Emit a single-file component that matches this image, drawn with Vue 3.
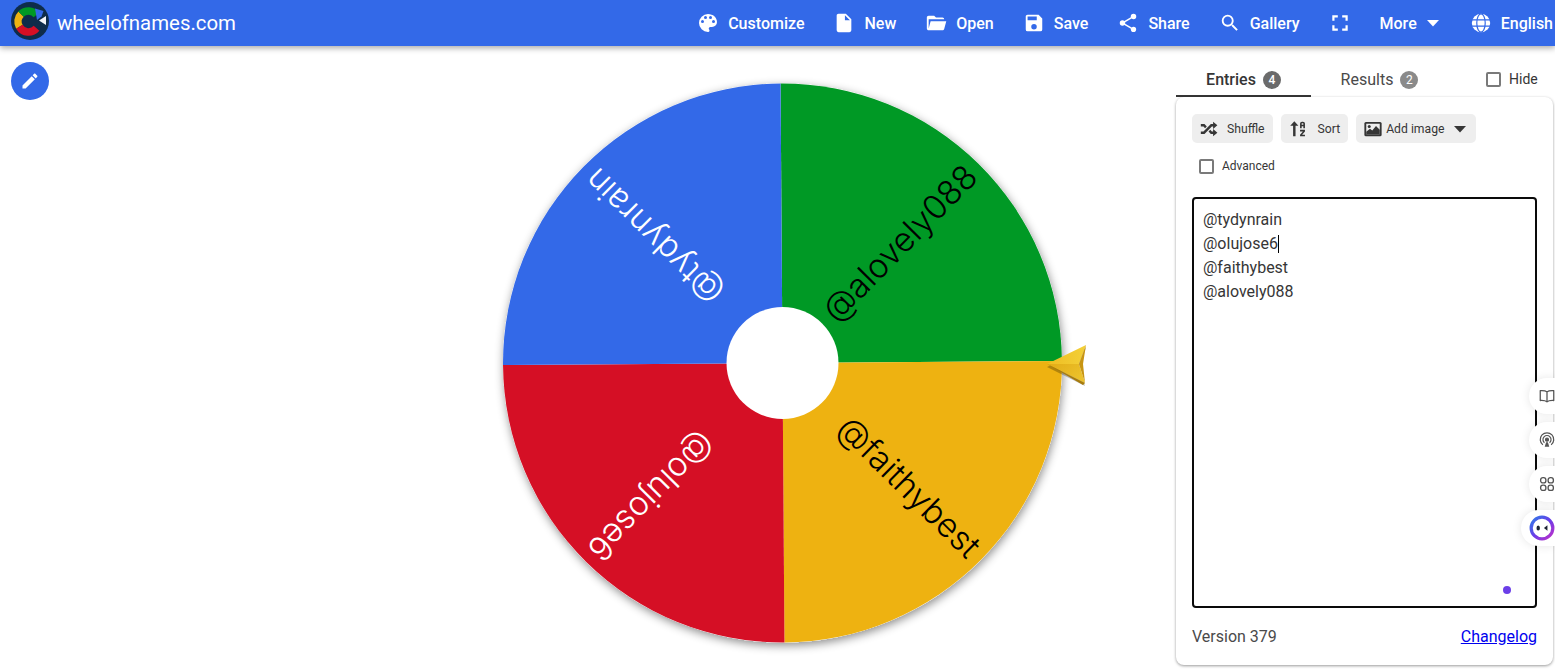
<template>
  <div class="page">
    <header class="topbar">
      <div class="brand">
        <svg class="logo" viewBox="0 0 38 38">
          <circle cx="19" cy="19" r="19" fill="#0e2c4a" />
          <path d="M8.41 24.75A10.5 10.5 0 0 1 10.07 12.07" class="seg" stroke="#eeb211" />
          <path d="M10.07 12.07A10.5 10.5 0 0 1 25.54 12.75" class="seg" stroke="#009925" />
          <path d="M25.54 26.25A10.5 10.5 0 0 1 8.41 24.75" class="seg" stroke="#d50f25" />
          <path d="M24 6.5L32.5 9L30.5 14.5L26 18Z" fill="#3369e8" />
          <path d="M35 14L35 23L28 18.5Z" fill="#f2f4f8" />
        </svg>
        <span class="brand-name">wheelofnames.com</span>
      </div>
      <nav class="menu">
        <a v-for="item in menu" :key="item.icon" class="menu-item">
          <svg class="menu-icon" :viewBox="item.box || '0 0 24 24'"><path :d="icons[item.icon]" fill="#fff" /></svg>
          <span v-if="item.label">{{ item.label }}</span>
        </a>
        <a class="menu-item">
          <span>More</span>
          <svg class="menu-caret" viewBox="0 0 24 24"><path :d="icons.caret" fill="#fff" /></svg>
        </a>
        <a class="menu-item">
          <svg class="menu-icon" viewBox="0 0 24 24">
            <circle cx="12" cy="12" r="10" fill="#fff" />
            <g fill="none" stroke="#3369e8" stroke-width="1.3">
              <ellipse cx="12" cy="12" rx="4.6" ry="10" />
              <path d="M2 8.6H22M2 15.4H22" />
            </g>
          </svg>
          <span>English</span>
        </a>
      </nav>
    </header>

    <main class="content">
      <section class="wheel-area">
        <button class="edit-btn">
          <svg viewBox="0 0 24 24"><path :d="icons.pencil" fill="#fff" /></svg>
        </button>
        <svg class="wheel" viewBox="482 58 610 610">
          <defs>
            <filter id="wheelShadow" x="-5%" y="-5%" width="110%" height="110%">
              <feDropShadow dx="1" dy="3" stdDeviation="5" flood-color="#000" flood-opacity="0.45" />
            </filter>
            <linearGradient id="goldA" x1="0" y1="0" x2="1" y2="0">
              <stop offset="0" stop-color="#eebd22" />
              <stop offset="1" stop-color="#f3d038" />
            </linearGradient>
            <linearGradient id="goldB" x1="0" y1="0" x2="1" y2="0.6">
              <stop offset="0" stop-color="#e2ac16" />
              <stop offset="1" stop-color="#ecc22c" />
            </linearGradient>
          </defs>
          <circle cx="782.5" cy="363" r="279.5" fill="#fff" filter="url(#wheelShadow)" />
          <path v-for="s in slices" :key="s.name" :d="s.path" :fill="s.color" />
          <text
            v-for="s in slices"
            :key="'t' + s.name"
            class="slice-text"
            :transform="`rotate(${s.mid} 782.5 363)`"
            x="1052"
            y="363"
            dy="0.33em"
            text-anchor="end"
            :fill="s.text"
          >{{ s.name }}</text>
          <circle cx="782.5" cy="363" r="56" fill="#fff" />
          <path d="M1047 364L1086 345L1079 364L1085 383Z" fill="#000" opacity="0.25" transform="translate(0 3)" />
          <path d="M1047 364L1086 345L1079 364Z" fill="url(#goldA)" />
          <path d="M1047 364L1079 364L1085 383Z" fill="url(#goldB)" />
          <path d="M1086 345L1079 364L1085 383L1083 364Z" fill="#c89512" />
          <path d="M1047 364L1085 383L1083 385Z" fill="#a87c0c" />
        </svg>
      </section>

      <aside class="panel">
        <div class="tabs">
          <div class="tab active">Entries <span class="badge dark">4</span></div>
          <div class="tab">Results <span class="badge">2</span></div>
          <label class="hide"><span class="box"></span>Hide</label>
        </div>
        <div class="card">
          <div class="tools">
            <button class="tool">
              <svg viewBox="1 1 22 22"><path :d="icons.shuffle" fill="#363636" /></svg>
              <span>Shuffle</span>
            </button>
            <button class="tool wide">
              <svg viewBox="1 1 22 22"><path :d="icons.sort" fill="#363636" /></svg>
              <span>Sort</span>
            </button>
            <button class="tool tight">
              <svg viewBox="0 0 24 24">
                <rect x="0.5" y="2.5" width="23" height="19" rx="2" fill="#363636" />
                <rect x="3" y="5" width="18" height="14" fill="#eee" />
                <circle cx="7" cy="8.5" r="2" fill="#363636" />
                <path d="M3 19V15.5L8 11.5L11 14L16 8L21 13V19Z" fill="#363636" />
              </svg>
              <span>Add image</span>
              <svg class="tool-caret" viewBox="0 0 24 24"><path :d="icons.caret" fill="#363636" /></svg>
            </button>
          </div>
          <label class="advanced"><span class="box"></span>Advanced</label>
          <div class="entries">
            <div v-for="(name, index) in names" :key="name" class="entry">{{ name }}<span v-if="index === 1" class="caret"></span></div>
            <span class="grammar-dot"></span>
          </div>
          <div class="version">
            <span>Version 379</span>
            <a class="changelog" href="#">Changelog</a>
          </div>
        </div>
      </aside>

      <div class="side-tools">
        <div class="side-pill">
          <svg viewBox="0 0 24 24" fill="none" stroke="#555" stroke-width="1.7" stroke-linejoin="round">
            <path d="M12 6.5C10 4.8 7 4.5 3 4.8V18C7 17.8 10 18 12 19.8C14 18 17 17.8 21 18V4.8C17 4.5 14 4.8 12 6.5ZM12 6.5V19.8" />
          </svg>
        </div>
        <div class="side-pill">
          <svg viewBox="0 0 24 24" fill="none" stroke="#555" stroke-width="1.6">
            <path d="M6.5 18.5A9 9 0 1 1 17.5 18.5" />
            <path d="M8.6 15.6A5.4 5.4 0 1 1 15.4 15.6" />
            <circle cx="12" cy="11.5" r="2" fill="#555" />
            <path d="M9 21L10.8 15H13.2L15 21Z" fill="#555" stroke="none" />
          </svg>
        </div>
        <div class="side-pill">
          <svg viewBox="0 0 24 24" fill="none" stroke="#555" stroke-width="1.8">
            <rect x="3.5" y="3.5" width="7" height="7" rx="3" />
            <rect x="13.5" y="3.5" width="7" height="7" rx="3" />
            <rect x="3.5" y="13.5" width="7" height="7" rx="3" />
            <rect x="13.5" y="13.5" width="7" height="7" rx="3" />
          </svg>
        </div>
        <div class="side-pill bot">
          <svg viewBox="0 0 24 24">
            <defs>
              <linearGradient id="botRing" x1="0" y1="0" x2="1" y2="1">
                <stop offset="0" stop-color="#2f7be8" />
                <stop offset="0.5" stop-color="#6a3de8" />
                <stop offset="1" stop-color="#c030c8" />
              </linearGradient>
            </defs>
            <circle cx="12" cy="12" r="10" fill="#fff" stroke="url(#botRing)" stroke-width="3" />
            <ellipse cx="8.5" cy="12" rx="1.6" ry="2.4" fill="#1c2333" />
            <path d="M17 9.5L13.8 12L17 14.5Z" fill="#1c2333" />
          </svg>
        </div>
      </div>
    </main>
  </div>
</template>

<script setup>
const icons = {
  palette: 'M17.5,12A1.5,1.5 0 0,1 16,10.5A1.5,1.5 0 0,1 17.5,9A1.5,1.5 0 0,1 19,10.5A1.5,1.5 0 0,1 17.5,12M14.5,8A1.5,1.5 0 0,1 13,6.5A1.5,1.5 0 0,1 14.5,5A1.5,1.5 0 0,1 16,6.5A1.5,1.5 0 0,1 14.5,8M9.5,8A1.5,1.5 0 0,1 8,6.5A1.5,1.5 0 0,1 9.5,5A1.5,1.5 0 0,1 11,6.5A1.5,1.5 0 0,1 9.5,8M6.5,12A1.5,1.5 0 0,1 5,10.5A1.5,1.5 0 0,1 6.5,9A1.5,1.5 0 0,1 8,10.5A1.5,1.5 0 0,1 6.5,12M12,3A9,9 0 0,0 3,12A9,9 0 0,0 12,21A1.5,1.5 0 0,0 13.5,19.5C13.5,19.11 13.35,18.76 13.11,18.5C12.88,18.23 12.73,17.88 12.73,17.5A1.5,1.5 0 0,1 14.23,16H16A5,5 0 0,0 21,11C21,6.58 16.97,3 12,3Z',
  file: 'M13,9V3.5L18.5,9M6,2C4.89,2 4,2.89 4,4V20A2,2 0 0,0 6,22H18A2,2 0 0,0 20,20V8L14,2H6Z',
  folder: 'M19,20H4C2.89,20 2,19.1 2,18V6C2,4.89 2.89,4 4,4H10L12,6H19A2,2 0 0,1 21,8H21L4,8V18L6.14,10H23.21L20.93,18.5C20.7,19.37 19.92,20 19,20Z',
  save: 'M15,9H5V5H15M12,19A3,3 0 0,1 9,16A3,3 0 0,1 12,13A3,3 0 0,1 15,16A3,3 0 0,1 12,19M17,3H5C3.89,3 3,3.9 3,5V19A2,2 0 0,0 5,21H19A2,2 0 0,0 21,19V7L17,3Z',
  share: 'M18,16.08C17.24,16.08 16.56,16.38 16.04,16.85L8.91,12.7C8.96,12.47 9,12.24 9,12C9,11.76 8.96,11.53 8.91,11.3L15.96,7.19C16.5,7.69 17.21,8 18,8A3,3 0 0,0 21,5A3,3 0 0,0 18,2A3,3 0 0,0 15,5C15,5.24 15.04,5.47 15.09,5.7L8.04,9.81C7.5,9.31 6.79,9 6,9A3,3 0 0,0 3,12A3,3 0 0,0 6,15C6.79,15 7.5,14.69 8.04,14.19L15.16,18.34C15.11,18.55 15.08,18.77 15.08,19C15.08,20.61 16.39,21.91 18,21.91C19.61,21.91 20.92,20.61 20.92,19A2.92,2.92 0 0,0 18,16.08Z',
  search: 'M9.5,3A6.5,6.5 0 0,1 16,9.5C16,11.11 15.41,12.59 14.44,13.73L14.71,14H15.5L20.5,19L19,20.5L14,15.5V14.71L13.73,14.44C12.59,15.41 11.11,16 9.5,16A6.5,6.5 0 0,1 3,9.5A6.5,6.5 0 0,1 9.5,3M9.5,5C7,5 5,7 5,9.5C5,12 7,14 9.5,14C12,14 14,12 14,9.5C14,7 12,5 9.5,5Z',
  fullscreen: 'M5,5H10V7H7V10H5V5M14,5H19V10H17V7H14V5M17,14H19V19H14V17H17V14M10,17V19H5V14H7V17H10Z',
  caret: 'M6,9L12,15.5L18,9H6Z',
  pencil: 'M20.71,7.04C21.1,6.65 21.1,6 20.71,5.63L18.37,3.29C18,2.9 17.35,2.9 16.96,3.29L15.12,5.12L18.87,8.87M3,17.25V21H6.75L17.81,9.93L14.06,6.18L3,17.25Z',
  shuffle: 'M17,3L22.25,7.5L17,12L22.25,16.5L17,21V18H14.26L11.44,15.18L13.56,13.06L15.5,15H17V9H15.5L6.5,18H2V15H5.26L14.26,6H17V3M2,6H6.5L9.32,8.82L7.2,10.94L5.26,9H2V6Z',
  sort: 'M6 21V8H2.5L7.5 2.5L12.5 8H9V21ZM14.5 11V5.5C14.5 4 15.5 3 17 3H18C19.5 3 20.5 4 20.5 5.5V11H18.5V8.5H16.5V11ZM16.5 6.8H18.5V5.5C18.5 5.2 18.3 5 18 5H17C16.7 5 16.5 5.2 16.5 5.5ZM14.5 13H20.5V15L17 19H20.5V21H14.5V19L18 15H14.5Z'
}

const menu = [
  { icon: 'palette', label: 'Customize', box: '1 1 22 22' },
  { icon: 'file', label: 'New' },
  { icon: 'folder', label: 'Open' },
  { icon: 'save', label: 'Save' },
  { icon: 'share', label: 'Share' },
  { icon: 'search', label: 'Gallery' },
  { icon: 'fullscreen', label: '', box: '2 2 20 20' },
]

const names = ['@tydynrain', '@olujose6', '@faithybest', '@alovely088']

// slices go clockwise from the top, the wheel sits a little off square
const cx = 782.5
const cy = 363
const r = 279.5
const tilt = -0.4

function point(deg) {
  const a = (deg * Math.PI) / 180
  return `${(cx + r * Math.cos(a)).toFixed(2)} ${(cy + r * Math.sin(a)).toFixed(2)}`
}

function slice(from, to) {
  return `M${cx} ${cy}L${point(from)}A${r} ${r} 0 0 1 ${point(to)}Z`
}

const slices = [
  { name: '@alovely088', color: '#009925', text: '#000', start: -90 },
  { name: '@faithybest', color: '#eeb211', text: '#000', start: 0 },
  { name: '@olujose6', color: '#d50f25', text: '#fff', start: 90 },
  { name: '@tydynrain', color: '#3369e8', text: '#fff', start: 180 },
].map(s => ({
  ...s,
  path: slice(s.start + tilt, s.start + 90 + tilt),
  mid: s.start + 45 + tilt,
}))
</script>

<style scoped>
.page {
  height: 672px;
  display: flex;
  flex-direction: column;
  font-family: Roboto, "Liberation Sans", sans-serif;
  color: #363636;
  overflow: hidden;
  background: #fff;
}

.topbar {
  height: 46px;
  flex: none;
  display: flex;
  align-items: center;
  justify-content: space-between;
  padding: 0 2px 0 11px;
  background: #3369e8;
  box-shadow: 0 2px 6px rgba(0, 0, 0, 0.35);
  position: relative;
  z-index: 2;
  color: #fff;
}

.brand {
  display: flex;
  align-items: center;
  gap: 8px;
}

.logo {
  width: 38px;
  height: 38px;
  margin-bottom: 5px;
}

.seg {
  fill: none;
  stroke-width: 7.5;
}

.brand-name {
  font-size: 20.4px;
}

.menu {
  display: flex;
  align-items: center;
  gap: 28px;
}

.menu-item {
  display: flex;
  align-items: center;
  gap: 8px;
  font-size: 16px;
  font-weight: 500;
}

.menu-icon {
  width: 22px;
  height: 22px;
  margin: 0 1px;
}

.menu-caret {
  width: 24px;
  height: 24px;
  margin: 0 -4px;
}

.content {
  flex: 1;
  display: flex;
  position: relative;
  min-height: 0;
}

.wheel-area {
  flex: 1;
  display: flex;
  justify-content: flex-end;
  padding: 12px 84px 0 0;
  position: relative;
}

.edit-btn {
  position: absolute;
  left: 11px;
  top: 16px;
  width: 38px;
  height: 38px;
  border: none;
  border-radius: 50%;
  background: #3369e8;
  display: flex;
  align-items: center;
  justify-content: center;
  padding: 0;
}

.edit-btn svg {
  width: 20px;
  height: 20px;
}

.wheel {
  width: 610px;
  height: 610px;
  flex: none;
}

.slice-text {
  font-family: Inter, Lato, sans-serif;
  font-size: 33.5px;
  font-weight: 300;
}

.panel {
  width: 379px;
  flex: none;
  box-sizing: border-box;
  padding-right: 2px;
  display: flex;
  flex-direction: column;
}

.tabs {
  height: 51px;
  flex: none;
  display: flex;
  align-items: flex-end;
}

.tab {
  width: 135px;
  height: 36px;
  box-sizing: border-box;
  display: flex;
  align-items: center;
  justify-content: center;
  gap: 7px;
  font-size: 16px;
  color: #4a4a4a;
  padding: 1px 0 0 2px;
}

.tab.active {
  color: #363636;
  font-weight: 500;
  padding: 3px 0 0;
  border-bottom: 2px solid #363636;
}

.badge {
  width: 18px;
  height: 18px;
  border-radius: 50%;
  background: #8a8a8a;
  color: #fff;
  font-size: 12px;
  display: flex;
  align-items: center;
  justify-content: center;
}

.badge.dark {
  background: #6b6b6b;
}

.hide {
  margin: 0 0 8px 40px;
  display: flex;
  align-items: center;
  gap: 8px;
  font-size: 14px;
  height: 20px;
}

.box {
  width: 15px;
  height: 15px;
  border: 2px solid #7a7a7a;
  border-radius: 2px;
  box-sizing: border-box;
  flex: none;
}

.card {
  height: 568px;
  box-sizing: border-box;
  padding: 17px 16px 0;
  border-radius: 8px;
  background: #fff;
  box-shadow: 0 1px 3px rgba(0, 0, 0, 0.4);
  display: flex;
  flex-direction: column;
}

.tools {
  display: flex;
  gap: 8px;
}

.tool {
  height: 29px;
  border: none;
  border-radius: 5px;
  background: #eee;
  padding: 0 8px;
  display: flex;
  align-items: center;
  gap: 9px;
  font-family: inherit;
  font-size: 12.2px;
  color: #363636;
}

.tool svg {
  width: 18px;
  height: 18px;
}

.tool.wide {
  gap: 11px;
}

.tool.tight {
  gap: 4px;
}

.tool .tool-caret {
  width: 24px;
  height: 24px;
  margin-right: -4px;
}

.advanced {
  height: 16px;
  margin: 15px 0 0 7px;
  display: flex;
  align-items: center;
  gap: 8px;
  font-size: 12px;
}

.entries {
  margin-top: 23px;
  height: 411px;
  box-sizing: border-box;
  border: 2px solid #0a0a0a;
  border-radius: 4px;
  padding: 9px 9px;
  position: relative;
  font-size: 16px;
  line-height: 24px;
  color: #363636;
}

.caret {
  display: inline-block;
  width: 1px;
  height: 18px;
  background: #000;
  vertical-align: -4px;
}

.grammar-dot {
  position: absolute;
  right: 24px;
  bottom: 12px;
  width: 8px;
  height: 8px;
  border-radius: 50%;
  background: #6b3fe8;
}

.version {
  display: flex;
  justify-content: space-between;
  margin-top: 19px;
  font-size: 16px;
  color: #4a4a4a;
}

.changelog {
  color: #0000ee;
  text-decoration: underline;
}

.side-tools {
  position: absolute;
  right: 0;
  top: 332px;
  display: flex;
  flex-direction: column;
  align-items: flex-end;
  gap: 8px;
}

.side-pill {
  width: 26px;
  height: 36px;
  border-radius: 18px 0 0 18px;
  background: #fff;
  box-shadow: 0 0 10px rgba(0, 0, 0, 0.1);
  display: flex;
  align-items: center;
  padding-left: 9px;
  box-sizing: border-box;
  overflow: hidden;
}

.side-pill svg {
  width: 18px;
  height: 18px;
  flex: none;
}

.side-pill.bot {
  width: 34px;
  padding-left: 8px;
}

.side-pill.bot svg {
  width: 26px;
  height: 26px;
}
</style>

<style>
html,
body {
  overflow: hidden;
}
</style>
